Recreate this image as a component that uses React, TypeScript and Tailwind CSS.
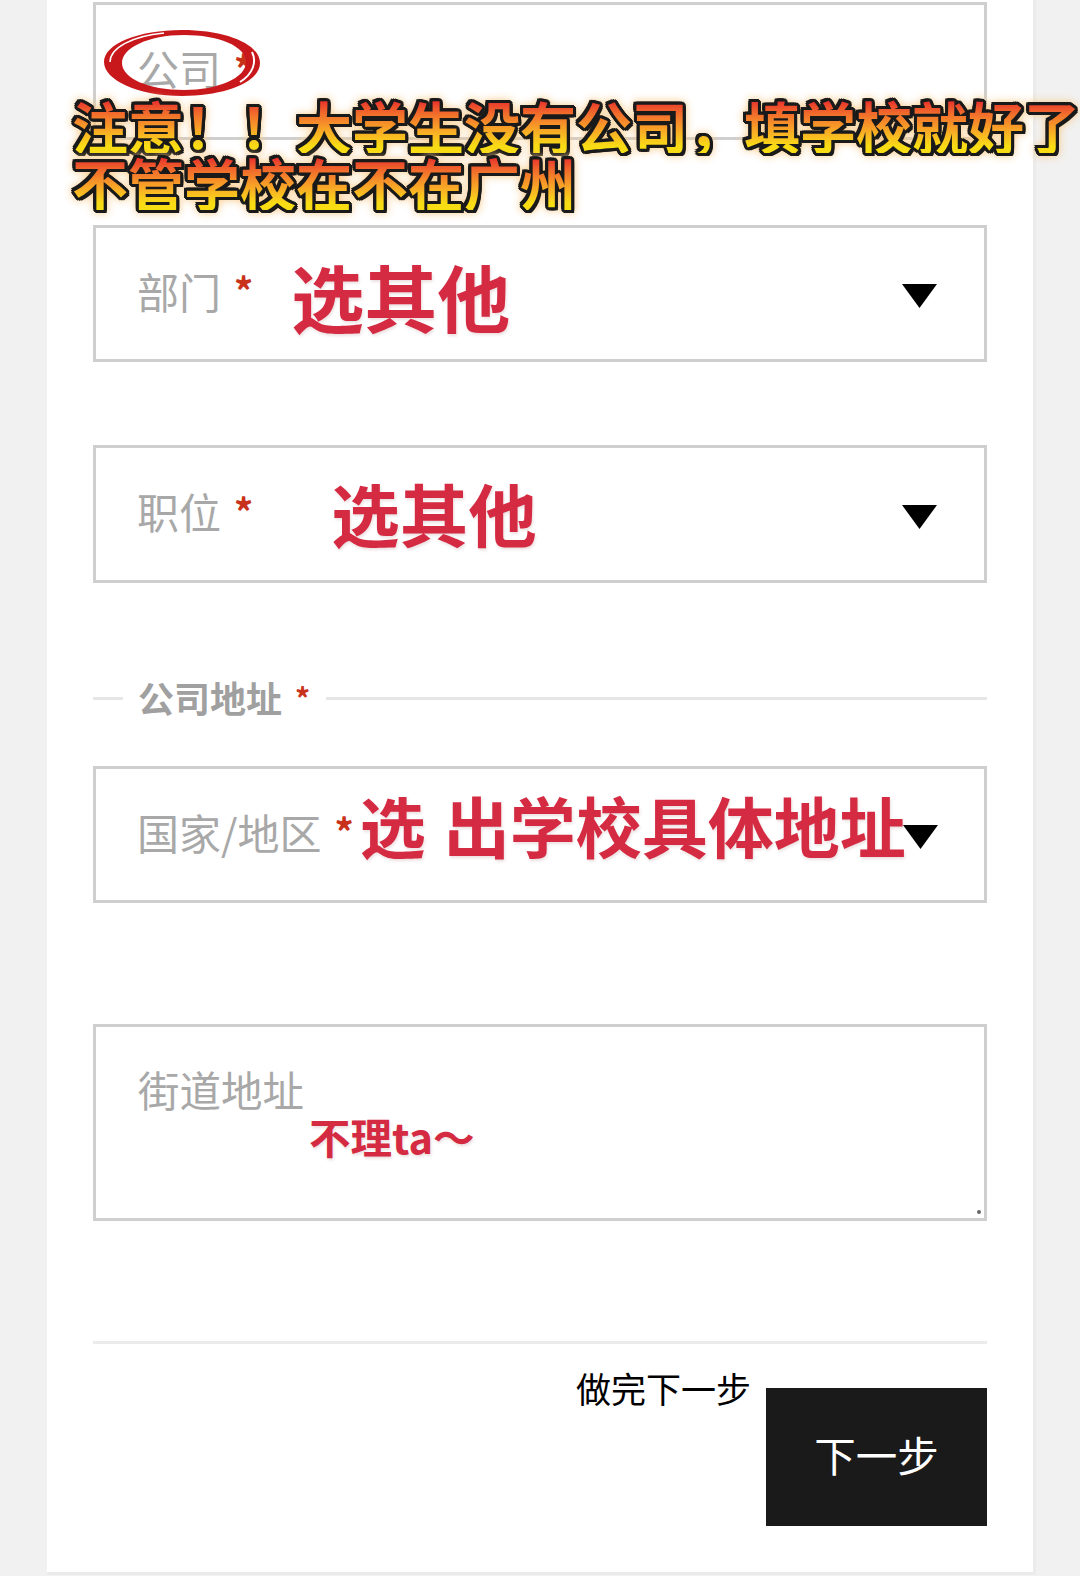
// Registration form screenshot with hand-added annotations

const CJK = "font-['Noto_Sans_CJK_SC','Noto_Sans',sans-serif]";

function Star({ className = '' }: { className?: string }) {
  return <span className={`shrink-0 font-bold leading-none text-[#c8321a] ${className}`}>*</span>;
}

function Triangle() {
  return (
    <svg width="35" height="24" viewBox="0 0 35 24" className="ml-auto mt-[6px] shrink-0">
      <path d="M0 0H35L17.5 24Z" fill="#000" />
    </svg>
  );
}

function Field({ label, children, arrow }: { label: string; children?: React.ReactNode; arrow?: boolean }) {
  return (
    <div className="flex h-[137.5px] items-center border-[3px] border-[#cfcfcf] pl-[41px] pr-[47px]">
      <span className="-mt-[5px] shrink-0 whitespace-nowrap text-[42px] leading-none text-[#a8a8a8]">{label}</span>
      <Star className="ml-[13px] -mt-[6px] text-[38px]" />
      {children}
      {arrow && <Triangle />}
    </div>
  );
}

function Note({ className, children }: { className: string; children: React.ReactNode }) {
  return (
    <span className={`shrink-0 whitespace-nowrap font-bold leading-none text-[#d42b43] [text-shadow:1px_2px_3px_rgba(120,40,50,0.15)] ${className}`}>
      {children}
    </span>
  );
}

const warnLine =
  "w-max whitespace-nowrap bg-gradient-to-b from-[#e8322c] from-[10%] to-[#f8dc14] to-[88%] bg-clip-text text-[56px] font-bold leading-[57px] text-transparent [filter:drop-shadow(2px_0_0_#1a1a1a)_drop-shadow(-2px_0_0_#1a1a1a)_drop-shadow(0_2px_0_#1a1a1a)_drop-shadow(0_-2px_0_#1a1a1a)_drop-shadow(1px_1px_0_#1a1a1a)_drop-shadow(-1px_-1px_0_#1a1a1a)_drop-shadow(0_0_4px_#f8c987)]";

export default function App() {
  return (
    <div className={`relative h-[1576px] w-[1080px] overflow-hidden bg-[#f1f1f1] ${CJK}`}>
      {/* Card */}
      <div className="ml-[47px] h-[1575px] w-[989px] border-r-[3px] border-b-[3px] border-[#ebebeb] bg-white pl-[46px] pr-[46px] pt-[2px]">
        <Field label="公司" />

        <div className="mt-[85px]">
          <Field label="部门" arrow>
            <Note className="ml-[38px] mt-[4px] text-[73px]">选其他</Note>
          </Field>
        </div>

        <div className="mt-[83px]">
          <Field label="职位" arrow>
            <Note className="ml-[78px] -mt-[2px] text-[68.5px]">选其他</Note>
          </Field>
        </div>

        {/* Section heading */}
        <div className="mt-[95.5px] flex h-[40px] items-center">
          <div className="h-[3px] w-[30px] bg-[#e6e6e6]" />
          <span className="-mt-[2px] ml-[15px] text-[36px] font-bold leading-none text-[#a0a0a0]">公司地址</span>
          <Star className="ml-[13px] -mt-[2px] text-[30px]" />
          <div className="ml-[16px] h-[3px] flex-1 bg-[#e6e6e6]" />
        </div>

        <div className="mt-[47.5px]">
          <Field label="国家/地区" arrow>
            <Note className="ml-[6px] -mr-[3px] -mt-[20px] text-[66px]">
              选<span className="ml-[18px]">出学校具体地址</span>
            </Note>
          </Field>
        </div>

        {/* Textarea */}
        <div className="relative mt-[120.5px] h-[197px] border-[3px] border-[#cfcfcf] pl-[42px] pt-[42px]">
          <div className="text-[41.5px] leading-none text-[#a8a8a8]">街道地址</div>
          <Note className="ml-[171px] mt-[6px] block text-[41.5px]">不理ta～</Note>
          <div className="absolute bottom-[4px] right-[3px] size-[4px] rounded-full bg-[#666]" />
        </div>

        <div className="mt-[120.5px] h-[3px] bg-[#ebebeb]" />

        {/* Footer */}
        <div className="mt-[43.5px] flex items-start justify-end">
          <span className="mr-[15px] -mt-[22px] text-[35px] leading-[44px] text-black">做完下一步</span>
          <button className="flex h-[138.5px] w-[221px] items-center justify-center bg-[#1a1a1a] pb-[4px] text-[41.5px] leading-none text-white">
            下一步
          </button>
        </div>
      </div>

      {/* Red circle scribble */}
      <svg className="absolute left-[102px] top-[28px]" width="160" height="70" viewBox="0 0 160 70" fill="none">
        <path
          fill="#c9181c"
          fillRule="evenodd"
          d="M2 34C2 16 36 2 80 2C124 2 158 16 158 35C158 54 124 68 80 68C36 68 2 52 2 34ZM20 35C20 50 46 62 82 62C116 62 144 50 144 34C144 18 116 7 82 7C46 7 20 20 20 35Z"
        />
        <path d="M8 34C8 20 30 8 62 5" stroke="#fff" strokeWidth="1.5" />
        <path d="M150 24C155 34 151 46 138 54" stroke="#fff" strokeWidth="2" />
      </svg>

      {/* Warning banner */}
      <div className="absolute left-[72px] top-[96px]">
        <div className={warnLine}>注意！！大学生没有公司，填学校就好了</div>
        <div className={warnLine}>不管学校在不在广州</div>
      </div>
    </div>
  );
}
